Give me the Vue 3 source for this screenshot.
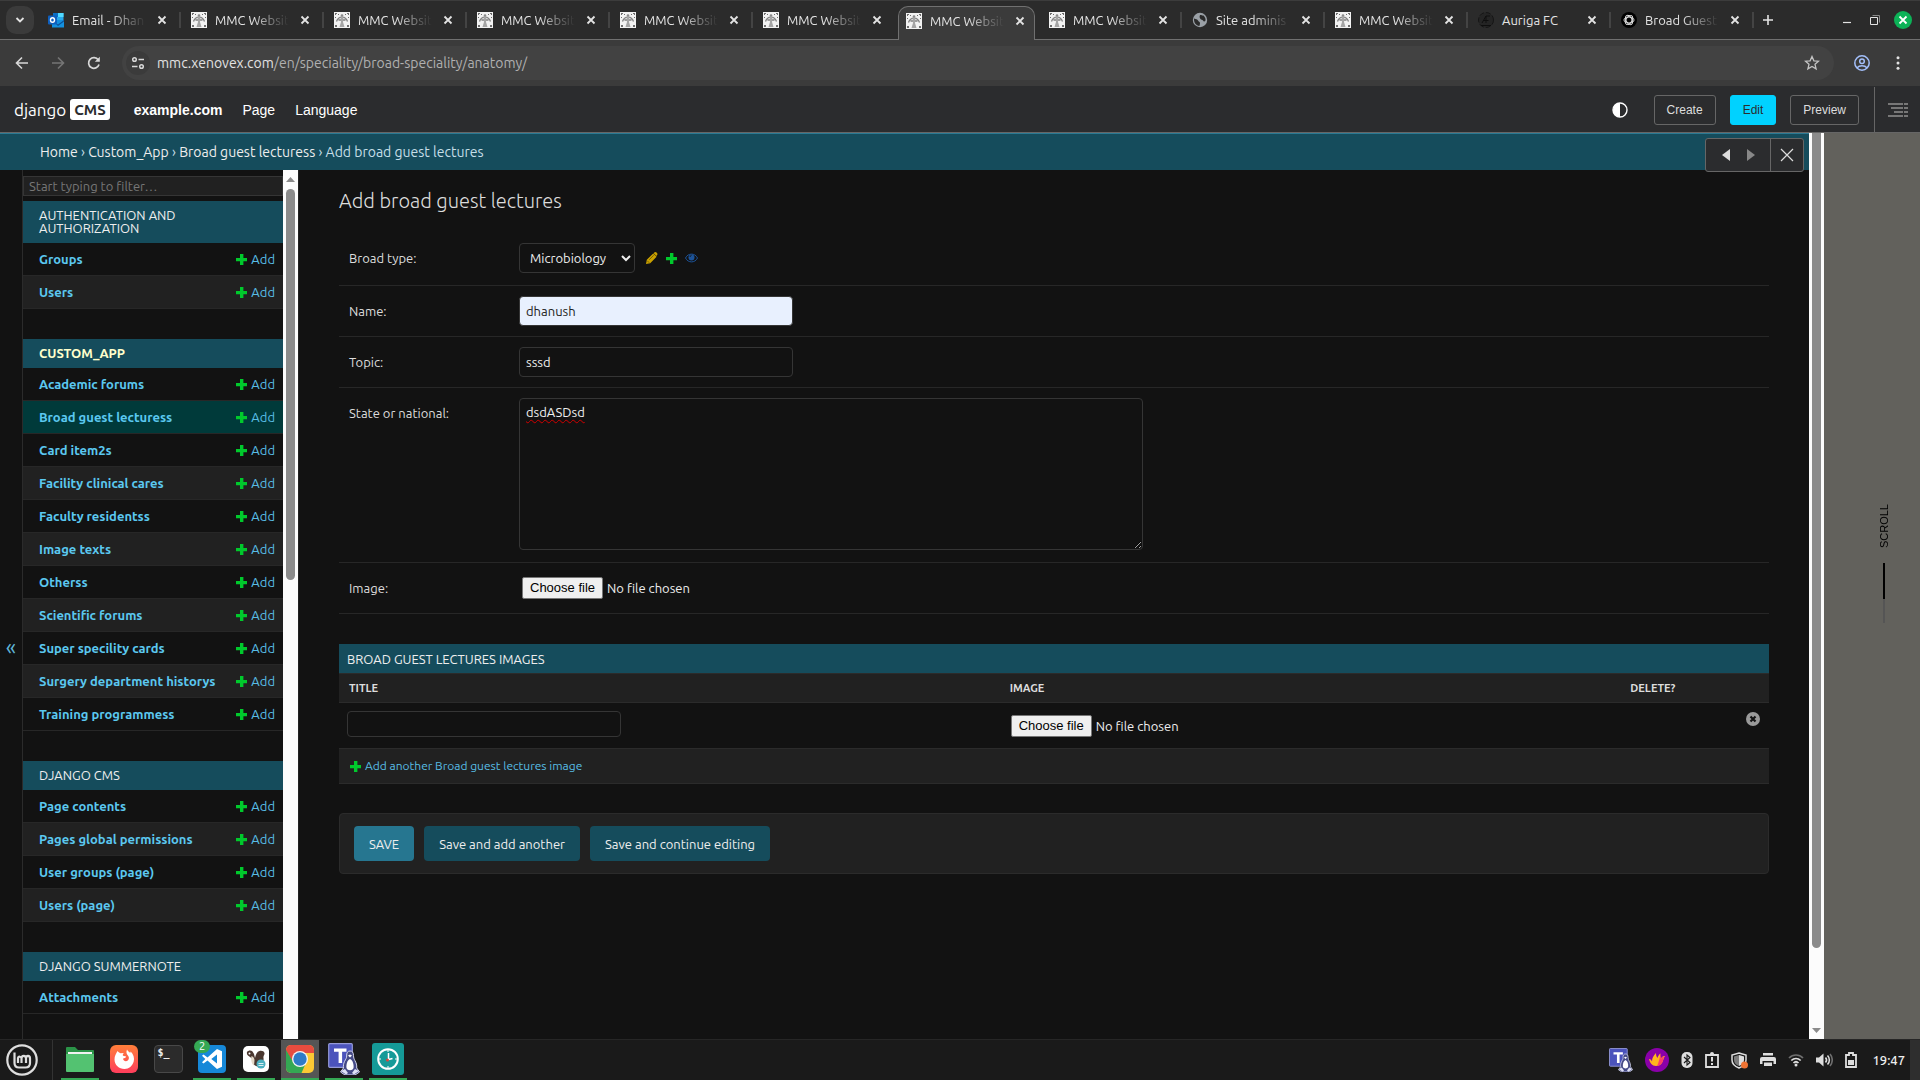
<script setup>
import { ref } from 'vue'

const tabs = [
  { title: 'Email - Dhan', icon: 'outlook' },
  { title: 'MMC Websit', icon: 'mmc' },
  { title: 'MMC Websit', icon: 'mmc' },
  { title: 'MMC Websit', icon: 'mmc' },
  { title: 'MMC Websit', icon: 'mmc' },
  { title: 'MMC Websit', icon: 'mmc' },
  { title: 'MMC Websit', icon: 'mmc', active: true },
  { title: 'MMC Websit', icon: 'mmc' },
  { title: 'Site adminis', icon: 'globe' },
  { title: 'MMC Websit', icon: 'mmc' },
  { title: 'Auriga FC', icon: 'auriga', short: true },
  { title: 'Broad Guest', icon: 'gpt' },
]

const apps = [
  { name: 'Authentication and Authorization', models: ['Groups', 'Users'] },
  {
    name: 'Custom_App',
    current: true,
    models: [
      'Academic forums',
      'Broad guest lecturess',
      'Card item2s',
      'Facility clinical cares',
      'Faculty residentss',
      'Image texts',
      'Otherss',
      'Scientific forums',
      'Super specility cards',
      'Surgery department historys',
      'Training programmess',
    ],
  },
  {
    name: 'django CMS',
    models: ['Page contents', 'Pages global permissions', 'User groups (page)', 'Users (page)'],
  },
  { name: 'Django Summernote', models: ['Attachments'] },
]

const currentModel = 'Broad guest lecturess'

const address = ref('/en/speciality/broad-speciality/anatomy/')
const broadType = ref('Microbiology')
const name = ref('dhanush')
const topic = ref('sssd')
const stateOrNational = ref('dsdASDsd')
</script>

<template>
  <div class="desktop">
    <!-- Shared symbols -->
    <svg class="defs" aria-hidden="true">
      <symbol id="i-close" viewBox="0 0 10 10">
        <path d="M1.5 1.5l7 7M8.5 1.5l-7 7" stroke="currentColor" stroke-width="1.8" fill="none" />
      </symbol>
      <symbol id="i-plus" viewBox="0 0 11 11">
        <path d="M4 0h3.4v4H11v3.2H7.4V11H4V7.2H0V4h4z" fill="currentColor" />
      </symbol>
      <symbol id="i-mmc" viewBox="0 0 16 16">
        <path d="M0 0h16v16H0z" fill="#f2f2f2" />
        <path d="M2.500 9.500C3.500 6.500 5.500 5.200 8 5.200s4.500 1.300 5.500 4.300M4.500 8h7" stroke="#808080" stroke-width="1.300" fill="none" />
        <path d="M6.500 5h3L9 10l1.500 5h-5L7 10z" fill="#a5a5a5" />
        <circle cx="8" cy="3.500" r="1.300" fill="#8a8a8a" />
        <path d="M1 1h2v1H2v1H1zM13 1h2v2h-1V2h-1zM1 13h2v2H1zM13 13h2v2h-2zM4 2h1v1H4zM11 2h1v1h-1zM1 5h1v1H1zM14 5h1v1h-1z" fill="#6d6d6d" />
      </symbol>
      <symbol id="i-outlook" viewBox="0 0 16 16">
        <path d="M5 1h10.500v9H5z" fill="#28a8ea" />
        <path d="M5 1h5v4H5z" fill="#0a6fc4" />
        <path d="M10 1h5.500v4H10z" fill="#50d9ff" />
        <path d="M4 8l12 0v7.500H4z" fill="#1490df" />
        <path d="M4 8l6 4.500L16 8v1.500l-6 4.500z" fill="#0a4f97" />
        <rect x="0" y="3.500" width="9" height="9" rx="1" fill="#0f5fbd" />
        <ellipse cx="4.500" cy="8" rx="2" ry="2.300" stroke="#fff" stroke-width="1.400" fill="none" />
      </symbol>
      <symbol id="i-globe" viewBox="0 0 16 16">
        <circle cx="8" cy="8" r="7.200" fill="#9aa0a6" />
        <path d="M2 6.500c2 1 3.500.500 4 2s2 1 2 2.500-.500 2-.500 3C4 13.500 1.800 11 2 6.500zM8 3c1.500-.500 2 1 3.500.500 1 1 2.500 3 2 5-1 1.500-2 1-2.500 0s-2-.500-2.500-1.500S7 5.500 8 3z" fill="#2b2b2b" />
      </symbol>
      <symbol id="i-auriga" viewBox="0 0 16 16">
        <circle cx="8" cy="8" r="7.500" fill="#242424" stroke="#161616" stroke-width="1" stroke-dasharray="5 2" />
        <path d="M4 11l4-7v7M5.500 8.500h5M8 4h4M3 13.500h10" stroke="#0e0e0e" stroke-width="1" fill="none" />
      </symbol>
      <symbol id="i-gpt" viewBox="0 0 16 16">
        <circle cx="8" cy="8" r="8" fill="#000" />
        <g stroke="#e8e8e8" stroke-width=".9" fill="none">
          <ellipse cx="8" cy="8" rx="5" ry="2.900" />
          <ellipse cx="8" cy="8" rx="5" ry="2.900" transform="rotate(60 8 8)" />
          <ellipse cx="8" cy="8" rx="5" ry="2.900" transform="rotate(120 8 8)" />
        </g>
      </symbol>
      <symbol id="i-teams" viewBox="0 0 32 32">
        <rect x=".7" y=".7" width="23.600" height="23.600" rx="1" fill="#4b53bc" stroke="#9499d8" stroke-width="1.200" />
        <path d="M6 5.500h12.500v3.300h-4.400V20h-3.500V8.800H6z" fill="#fff" />
        <path d="M22 8c-2.500 0-3.500 2-3.300 5 .1 2-1 3-2.200 5.500-1 2-1.300 4.500-1 6.500l-3 4 4.500 3h10l4.500-3-2.800-4c.3-3-.5-5-1.800-7.500-1-1.800-1.300-2.800-1.400-5C25.400 9.500 24.500 8 22 8z" fill="#454a86" stroke="#d6d8ee" stroke-width="1" />
        <path d="M22 16c-2.500 1-4 5-3.500 9 1 3 6 3 7 0 .5-4-1-8-3.500-9z" fill="#fff" />
        <path d="M20 12.500l2-1 2 1-2 2z" fill="#fff" />
        <path d="M13 28l4-2 3 4-2 1.500zM31 28l-4-2-3 4 2 1.500z" fill="#dfe1f5" />
      </symbol>
    </svg>

    <!-- Tab strip -->
    <header class="tabstrip">
      <button class="tab-search" type="button" aria-label="Search tabs">
        <svg width="10" height="8" viewBox="0 0 10 8"><path d="M1.500 2L5 5.500 8.500 2" stroke="#e3e3e3" stroke-width="1.800" fill="none" /></svg>
      </button>
      <nav class="tabs">
        <div v-for="(tab, i) in tabs" :key="i" class="tab" :class="{ active: tab.active, plain: tab.active || (tabs[i + 1] && tabs[i + 1].active) }">
          <svg width="16" height="16"><use :href="'#i-' + tab.icon" /></svg>
          <span class="tab-title" :class="{ faded: !tab.short }">{{ tab.title }}</span>
          <button class="tab-close" type="button" aria-label="Close tab">
            <svg width="10" height="10"><use href="#i-close" /></svg>
          </button>
        </div>
      </nav>
      <button class="icon-btn" type="button" aria-label="New tab">
        <svg width="12" height="12" viewBox="0 0 12 12"><path d="M6 1v10M1 6h10" stroke="#e3e3e3" stroke-width="1.600" /></svg>
      </button>
      <div class="window-controls">
        <button class="icon-btn" type="button" aria-label="Minimize">
          <svg width="10" height="10" viewBox="0 0 10 10"><path d="M1 7.500h8" stroke="#e3e3e3" stroke-width="1.200" /></svg>
        </button>
        <button class="icon-btn" type="button" aria-label="Restore">
          <svg width="12" height="12" viewBox="0 0 12 12"><path d="M1.500 3.500h7v7h-7z" stroke="#e3e3e3" fill="none" /><path d="M3.500 1.500h7v7" stroke="#8a8a8a" fill="none" /></svg>
        </button>
        <button class="icon-btn window-close" type="button" aria-label="Close">
          <svg width="10" height="10"><use href="#i-close" /></svg>
        </button>
      </div>
    </header>

    <!-- Address bar -->
    <div class="toolbar">
      <button class="icon-btn" type="button" aria-label="Back">
        <svg width="16" height="16" viewBox="0 0 16 16"><path d="M14 8H3M8 2.500L2.500 8 8 13.500" stroke="#d8d8d8" stroke-width="1.600" fill="none" /></svg>
      </button>
      <button class="icon-btn" type="button" aria-label="Forward">
        <svg width="16" height="16" viewBox="0 0 16 16"><path d="M2 8h11M8 2.500L13.500 8 8 13.500" stroke="#757575" stroke-width="1.600" fill="none" /></svg>
      </button>
      <button class="icon-btn" type="button" aria-label="Reload">
        <svg width="16" height="16" viewBox="0 0 16 16"><path d="M13 9.500A5.300 5.300 0 1 1 12.300 5" stroke="#d8d8d8" stroke-width="1.700" fill="none" /><path d="M13.800 1.800v5H8.800z" fill="#d8d8d8" /></svg>
      </button>
      <div class="omnibox">
        <span class="site-info">
          <svg width="14" height="14" viewBox="0 0 14 14"><g stroke="#d8d8d8" stroke-width="1.500" fill="none"><circle cx="3.500" cy="3.500" r="1.800" /><path d="M7.500 3.500H13M1 10.500h5.500" /><circle cx="10.500" cy="10.500" r="1.800" /></g></svg>
        </span>
        <span class="url"><b>mmc.xenovex.com</b>{{ address }}</span>
        <button class="icon-btn" type="button" aria-label="Bookmark">
          <svg width="16" height="16" viewBox="0 0 16 16"><path d="M8 1.500l1.900 4.300 4.600.400-3.500 3.100 1.100 4.600L8 11.400l-4.100 2.500L5 9.300 1.500 6.200l4.600-.400z" stroke="#c4c4c4" stroke-width="1.300" fill="none" /></svg>
        </button>
      </div>
      <button class="icon-btn" type="button" aria-label="Profile">
        <svg width="16" height="18" viewBox="1 0 16 18"><g stroke="#a3bffa" stroke-width="1.500" fill="none"><circle cx="9" cy="9" r="7.200" /><circle cx="9" cy="7.200" r="2.300" /><path d="M3.800 14c2.800-3 7.600-3 10.400 0" /></g></svg>
      </button>
      <button class="icon-btn" type="button" aria-label="Menu">
        <svg width="16" height="16" viewBox="0 0 16 16"><g fill="#e3e3e3"><circle cx="8" cy="2.800" r="1.500" /><circle cx="8" cy="8" r="1.500" /><circle cx="8" cy="13.200" r="1.500" /></g></svg>
      </button>
    </div>

    <!-- CMS toolbar -->
    <div class="cms-bar">
      <a class="cms-logo" href="#"><span>django</span><span class="cms-badge">CMS</span></a>
      <nav class="cms-menu">
        <a href="#"><strong>example.com</strong></a>
        <a href="#">Page</a>
        <a href="#">Language</a>
      </nav>
      <div class="cms-actions">
        <button class="icon-btn contrast" type="button" aria-label="Toggle theme">
          <svg width="16" height="16" viewBox="0 0 16 16"><circle cx="8" cy="8" r="7" stroke="#fff" stroke-width="1.400" fill="none" /><path d="M8 1a7 7 0 0 0 0 14z" fill="#fff" /></svg>
        </button>
        <button class="cms-btn" type="button">Create</button>
        <button class="cms-btn primary" type="button">Edit</button>
        <button class="cms-btn" type="button">Preview</button>
      </div>
      <button class="structure" type="button" aria-label="Structure">
        <svg width="20" height="16" viewBox="0 0 20 16"><g stroke="#777" stroke-width="2"><path d="M0 2h20M3 6h17M6 10h14M0 14h20" /></g><path d="M15.500 0v16" stroke="#2b2c2e" stroke-width="1" /></svg>
      </button>
    </div>

    <div class="viewport">
      <section class="modal">
        <nav class="breadcrumbs">
          <a href="#">Home</a> › <a href="#">Custom_App</a> › <a href="#">Broad guest lecturess</a> › Add broad guest lectures
        </nav>
        <div class="modal-controls">
          <button type="button" aria-label="Back"><svg width="8" height="12" viewBox="0 0 8 12"><path d="M8 0v12L0 6z" fill="#ddd" /></svg></button>
          <button type="button" aria-label="Forward"><svg width="8" height="12" viewBox="0 0 8 12"><path d="M0 0v12l8-6z" fill="#888" /></svg></button>
          <button class="modal-close" type="button" aria-label="Close"><svg width="14" height="14" viewBox="0 0 14 14"><path d="M1 1l12 12M13 1L1 13" stroke="#ddd" stroke-width="1.200" /></svg></button>
        </div>

        <div class="admin">
          <button class="nav-toggle" type="button" aria-label="Toggle navigation">«</button>
          <aside class="sidebar">
            <div class="sidebar-inner">
              <input class="filter" type="search" placeholder="Start typing to filter…" aria-label="Filter navigation items">
              <table v-for="app in apps" :key="app.name" class="module" :class="{ current: app.current }">
                <caption><a href="#">{{ app.name }}</a></caption>
                <tbody>
                  <tr v-for="model in app.models" :key="model" :class="{ selected: model === currentModel }">
                    <th scope="row"><a href="#">{{ model }}</a></th>
                    <td><a class="add" href="#"><svg width="11" height="11"><use href="#i-plus" /></svg>Add</a></td>
                  </tr>
                </tbody>
              </table>
            </div>
            <div class="scrollbar">
              <svg class="arrow" width="9" height="5" viewBox="0 0 9 5"><path d="M0 5h9L4.500 0z" fill="#8b8b8b" /></svg>
              <div class="thumb"></div>
            </div>
          </aside>

          <main class="content">
            <h1>Add broad guest lectures</h1>
            <form @submit.prevent>
              <div class="row">
                <label for="broad-type">Broad type:</label>
                <span class="related">
                  <select id="broad-type" v-model="broadType">
                    <option>Microbiology</option>
                  </select>
                  <a href="#" aria-label="Change"><svg width="12" height="12" viewBox="0 0 12 12"><path d="M0 12l.8-4.200L7.200 1.400l3.400 3.400L4.200 11.200zM8 .7c.9-.9 1.900-.9 2.800 0s.9 1.900 0 2.800l-.4.500L7.600 1.200z" fill="#c9a000" /><path d="M1.300 8.800l2 2M3.200 7.800l4.500-4.500" stroke="#6b5400" stroke-width=".8" /></svg></a>
                  <a href="#" class="green" aria-label="Add"><svg width="11" height="11"><use href="#i-plus" /></svg></a>
                  <a href="#" aria-label="View"><svg width="13" height="10" viewBox="0 0 13 10"><path d="M.5 5C3-.200 10-.200 12.500 5 10 10.200 3 10.200.5 5z" stroke="#1c5399" stroke-width="1" fill="none" /><circle cx="6.500" cy="4.600" r="3" fill="#1c5399" /><path d="M5 4a1.500 1.500 0 0 1 1.500-1.500" stroke="#121212" stroke-width=".8" fill="none" /></svg></a>
                </span>
              </div>
              <div class="row">
                <label for="name">Name:</label>
                <input id="name" v-model="name" class="text autofilled" type="text">
              </div>
              <div class="row">
                <label for="topic">Topic:</label>
                <input id="topic" v-model="topic" class="text" type="text">
              </div>
              <div class="row">
                <label for="state">State or national:</label>
                <textarea id="state" v-model="stateOrNational" spellcheck="false"></textarea>
              </div>
              <div class="row">
                <label for="image">Image:</label>
                <span class="file">
                  <input id="image" type="file">
                  <label class="file-btn" for="image">Choose file</label>
                  <span>No file chosen</span>
                </span>
              </div>

              <section class="inline-group">
                <h2>Broad guest lectures images</h2>
                <table>
                  <thead>
                    <tr><th class="c-title">Title</th><th class="c-image">Image</th><th>Delete?</th></tr>
                  </thead>
                  <tbody>
                    <tr>
                      <td><input class="text small" type="text" aria-label="Title"></td>
                      <td>
                        <span class="file">
                          <input id="inline-image" type="file">
                          <label class="file-btn" for="inline-image">Choose file</label>
                          <span>No file chosen</span>
                        </span>
                      </td>
                      <td class="delete">
                        <button class="icon-btn" type="button" aria-label="Remove">
                          <svg width="14" height="14" viewBox="0 0 14 14"><circle cx="7" cy="7" r="7" fill="#999" /><path d="M4.500 4.500l5 5M9.500 4.500l-5 5" stroke="#121212" stroke-width="2.200" /></svg>
                        </button>
                      </td>
                    </tr>
                    <tr class="add-row">
                      <td colspan="3"><a class="add" href="#"><svg width="11" height="11"><use href="#i-plus" /></svg>Add another Broad guest lectures image</a></td>
                    </tr>
                  </tbody>
                </table>
              </section>

              <div class="submit-row">
                <button class="default" type="submit">SAVE</button>
                <button type="submit">Save and add another</button>
                <button type="submit">Save and continue editing</button>
              </div>
            </form>
          </main>
        </div>
      </section>

      <div class="scrollbar outer">
        <div class="thumb"></div>
        <svg class="arrow" width="9" height="5" viewBox="0 0 9 5"><path d="M0 0h9L4.500 5z" fill="#8b8b8b" /></svg>
      </div>
      <div class="page-edge">
        <span class="scroll-text">SCROLL</span>
        <span class="scroll-line"></span>
      </div>
    </div>

    <!-- Desktop panel -->
    <footer class="panel">
      <button class="start" type="button" aria-label="Menu">
        <svg width="32" height="32" viewBox="0 0 32 32"><g stroke="#dedede" fill="none"><circle cx="16" cy="16" r="14.700" stroke-width="2.200" /><path d="M8.500 8.500v10.500c0 3 1.500 4.500 4.500 4.500h6.500c3 0 4.500-1.500 4.500-4.500v-4.500c0-3.500-4-3.500-4 0v4.500M20 14.500c0-3.500-4.500-3.500-4.500 0v4.500M15.500 14.500c0-2-3-2.500-3.500-.500v5" stroke-width="2.200" /></g></svg>
      </button>
      <div class="tasks">
        <button class="task open" type="button" aria-label="Files">
          <svg width="28" height="28" viewBox="0 0 28 28"><path d="M0 3a1 1 0 0 1 1-1h8l3 3h15a1 1 0 0 1 1 1v8H0z" fill="#2b9448" /><path d="M2 7h24v3H2z" fill="#f2f2f2" /><path d="M0 9h28v17a1 1 0 0 1-1 1H1a1 1 0 0 1-1-1z" fill="#53c271" /></svg>
        </button>
        <button class="task" type="button" aria-label="Firefox">
          <svg width="28" height="28" viewBox="0 0 28 28"><defs><linearGradient id="ff" x2="0" y2="1"><stop stop-color="#ff7f3a" /><stop offset="1" stop-color="#ff3d5c" /></linearGradient></defs><rect width="28" height="28" rx="6" fill="url(#ff)" /><path d="M7.500 6c1 1 1.500 1.800 3 2.200L14 8c-1 .8-1.500 1.700-1 2.800l3.200.8c-.5 1.500-2 1.500-3.200 2.200.5 2.700 3.500 3 5 1.500 1.500-1.600 1-4-.5-5.300-1-1-1.500-3-.5-5.500 1 1.800 2 2.500 3.300 3.300l.4-1.300c2.800 3 4 6.500 3 10C22.500 21 19 24 14.500 24 9 24 4.500 20 4.500 14.500 4.500 11 6 9 7.500 6z" fill="#fff" /></svg>
        </button>
        <button class="task" type="button" aria-label="Terminal">
          <span class="terminal">$_</span>
        </button>
        <button class="task open" type="button" aria-label="Visual Studio Code">
          <svg width="28" height="28" viewBox="0 0 28 28"><rect width="28" height="28" rx="4" fill="#1688d8" /><path d="M19 4l5 2.200v15.600L19 24 9.500 15.500l-4 3L4 17.300 7.300 14 4 10.700l1.500-1.200 4 3zM19 9.500L13.300 14l5.700 4.500z" fill="#fff" fill-rule="evenodd" /></svg>
          <span class="badge">2</span>
        </button>
        <button class="task open" type="button" aria-label="DBeaver">
          <svg width="26" height="26" viewBox="0 0 26 26"><rect width="26" height="26" rx="5" fill="#fff" /><path d="M4 6c1.500-2 4-2 5.500-.5L11 8l1 4c1-4 2-6.500 4.500-7 2-.5 4.500 0 5 2 .3 2-1.500 2.500-1 5 .5 4-1.500 8.500-5.500 8.500C10.500 20 10 17 9 13 8 10.500 3 10.500 4 6z" fill="#4a372f" /><path d="M8.500 10c2 1 3 2 3 4.500l-.5 5c-3-2-3-6-2.500-9.500z" fill="#e4d9c8" /><circle cx="6.500" cy="7.500" r="1" fill="#fff" /><circle cx="18" cy="18" r="4.500" fill="#4cb0c0" /><path d="M15.500 17.500h5M15.500 19.500h5" stroke="#fff" stroke-width=".8" /></svg>
        </button>
        <button class="task open focused" type="button" aria-label="Chrome">
          <svg width="28" height="28" viewBox="0 0 28 28"><defs><clipPath id="cr"><rect width="28" height="28" rx="5" /></clipPath></defs><g clip-path="url(#cr)"><path d="M0 0h28v28H0z" fill="#fcc934" /><path d="M0 0h28v8H14L7 17 0 6z" fill="#e74c3f" /><path d="M0 5l7.500 12.500L19 20l-3.500 8H0z" fill="#34a853" /></g><circle cx="14" cy="14" r="8" fill="#f4f4f4" /><circle cx="14" cy="14" r="6.700" fill="#2f7bc8" /></svg>
        </button>
        <button class="task open" type="button" aria-label="Teams">
          <svg width="32" height="32"><use href="#i-teams" /></svg>
        </button>
        <button class="task open" type="button" aria-label="Timer">
          <svg width="32" height="32" viewBox="0 0 32 32"><rect width="32" height="32" rx="3" fill="#159a98" /><circle cx="16" cy="16" r="9.800" stroke="#fff" stroke-width="2" fill="none" /><path d="M16 6v3M16 23v3M6 16h3M23 16h3" stroke="#fff" /><path d="M16.500 10v6.500l4-1" stroke="#fff" stroke-width="1.500" fill="none" /><circle cx="15.500" cy="17" r="1.500" fill="#d9443c" /></svg>
        </button>
      </div>
      <div class="tray">
        <svg width="24" height="24"><use href="#i-teams" /></svg>
        <svg width="24" height="24" viewBox="0 0 24 24"><circle cx="12" cy="12" r="12" fill="#8a00a8" /><path d="M4 11c2 0 2.500 1.500 3 2.500C7 10 8.500 8 11 5c0 2.500.5 3.500 1.500 5 .5-2 1.500-3.500 3-4.500-.5 2.500 0 4 .5 5 1-2 2.500-2.500 4-2.500-1.500 2-1.500 4-2.500 6-1.500 3-4 4-6.500 4-4 0-6-3-7-7z" fill="#ffb61e" /><path d="M16 5c-1 3 0 4 0 6 1-2 2-2.500 3.500-3-1.500 2-1 4-2 6-1.300 2.500-3 3.500-5.500 4 2-3 2.500-9 4-13z" fill="#ff3d68" /></svg>
        <svg width="12" height="16" viewBox="0 0 12 16"><rect x=".5" width="11" height="16" rx="5" fill="#dedede" /><path d="M3 5l6 5.500L6 13V3l3 2.500L3 11" stroke="#1a1a1a" stroke-width="1.100" fill="none" /></svg>
        <svg width="14" height="16" viewBox="0 0 14 16"><path d="M1 3h12v12H1z" stroke="#dedede" stroke-width="1.800" fill="none" /><circle cx="7" cy="2" r="2" fill="#dedede" /><path d="M7 5v4.500M7 11v2" stroke="#dedede" stroke-width="2" /></svg>
        <svg width="17" height="17" viewBox="0 0 17 17"><path d="M8 1l7 2v5c0 4-3 6.500-7 8-4-1.500-7-4-7-8V3z" stroke="#dedede" stroke-width="1.500" fill="none" /><path d="M8 3v11c-3-1.300-5-3-5-6V4.500z" fill="#dedede" opacity=".5" /><path d="M8 3l5 1.500V8c0 3-2 4.700-5 6z" fill="#dedede" /><circle cx="13.500" cy="13" r="3.500" fill="#ef7434" /></svg>
        <svg width="16" height="14" viewBox="0 0 16 14"><path d="M3 0h10v2.500H3zM0 6a2 2 0 0 1 2-2h12a2 2 0 0 1 2 2v5h-2.500V8h-11v3H0zM4 9.500h8V13H4z" fill="#dedede" /></svg>
        <svg width="16" height="14" viewBox="0 0 16 14"><g fill="none" stroke-width="1.700"><path d="M1 5c4-4 10-4 14 0" stroke="#6e6e6e" /><path d="M3.300 7.500c2.700-2.700 6.700-2.700 9.400 0M5.500 10c1.500-1.500 3.500-1.500 5 0" stroke="#dedede" /></g><circle cx="8" cy="12" r="1.500" fill="#dedede" /></svg>
        <svg width="17" height="14" viewBox="0 0 17 14"><path d="M0 4.500h3L7.500.5v13L3 9.500H0z" fill="#dedede" /><g fill="none" stroke-width="1.600"><path d="M9.500 4.500c1.300 1.500 1.300 3.500 0 5M11.500 2.500c2.500 2.500 2.500 6.500 0 9" stroke="#dedede" /><path d="M14 1c3 3.500 3 8.500 0 12" stroke="#6e6e6e" /></g></svg>
        <svg width="12" height="16" viewBox="0 0 12 16"><path d="M1 3h3V1h4v2h3v12H1z" stroke="#dedede" stroke-width="1.800" fill="none" /><path d="M3 8h6v5H3z" fill="#dedede" /></svg>
        <time>19:47</time>
      </div>
      <span class="show-desktop"></span>
    </footer>
  </div>
</template>

<style>
body {
  margin: 0;
  background: #121212;
}
</style>

<style scoped>
* {
  box-sizing: border-box;
}
.desktop {
  display: flex;
  flex-direction: column;
  height: 100vh;
  overflow: hidden;
  font: 13px/16px Ubuntu, "Noto Sans", sans-serif;
  color: #eee;
  background: #121212;
}
.defs {
  position: absolute;
  width: 0;
  height: 0;
}
svg {
  display: block;
  flex: none;
}
a {
  color: inherit;
  text-decoration: none;
}
button {
  padding: 0;
  border: 0;
  background: none;
  color: inherit;
  font: inherit;
  cursor: pointer;
}
.icon-btn {
  display: flex;
  align-items: center;
  justify-content: center;
}

/* Tab strip */
.tabstrip {
  display: flex;
  align-items: center;
  flex: none;
  height: 40px;
  padding: 0 8px 0 6px;
  background: #2b2b2b;
  border-top: 1px solid #3c3c3c;
  border-bottom: 1px solid #707070;
}
.tab-search {
  display: flex;
  align-items: center;
  justify-content: center;
  width: 28px;
  height: 28px;
  margin-right: 6px;
  border-radius: 10px;
  background: #3b3b3b;
}
.tabs {
  display: flex;
  align-self: stretch;
  flex: 0 1 1716px;
  min-width: 0;
}
.tab {
  position: relative;
  display: flex;
  align-items: center;
  flex: 1 1 0;
  min-width: 0;
  margin: 5px 6px 0 0;
  padding: 0 5px 5px 8px;
  color: #e3e3e3;
}
.tab::after {
  content: "";
  position: absolute;
  top: 6px;
  right: -4px;
  width: 2px;
  height: 16px;
  background: #444;
}
.tab.plain::after {
  display: none;
}
.tab.active {
  margin-bottom: -1px;
  padding: 0 4px 6px 7px;
  border: 1px solid #707070;
  border-bottom: 0;
  border-radius: 10px 10px 0 0;
  background: #3b3b3b;
}
.tab-title {
  flex: 1;
  min-width: 0;
  margin: 0 6px 0 8px;
  white-space: nowrap;
}
.tab-title.faded {
  mask-image: linear-gradient(90deg, #000 50%, transparent);
}
.tab-close {
  display: flex;
  align-items: center;
  justify-content: center;
  width: 20px;
  height: 20px;
}
.tabstrip > .icon-btn {
  width: 24px;
  height: 28px;
}
.window-controls {
  display: flex;
  align-items: center;
  gap: 10px;
  margin-left: auto;
}
.window-controls .icon-btn {
  width: 18px;
  height: 18px;
}
.window-close {
  border-radius: 50%;
  background: #0cb257;
  color: #fff;
}

/* Address bar */
.toolbar {
  display: flex;
  align-items: center;
  flex: none;
  gap: 20px;
  height: 46px;
  padding: 0 14px;
  background: #3b3b3b;
}
.omnibox {
  display: flex;
  align-items: center;
  flex: 1;
  height: 34px;
  padding: 0 14px 0 4px;
  border-radius: 17px;
  background: #424242;
}
.site-info {
  display: flex;
  align-items: center;
  justify-content: center;
  width: 24px;
  height: 24px;
  border-radius: 50%;
  background: #3b3b3b;
}
.url {
  flex: 1;
  margin-left: 7px;
  font-size: 14px;
  color: #b0b0b0;
}
.url b {
  font-weight: 400;
  color: #e3e3e3;
}

/* CMS toolbar */
.cms-bar {
  display: flex;
  align-items: center;
  flex: none;
  height: 47px;
  padding: 1px 0 0 14px;
  border-bottom: 1px solid #666;
  background: #2b2c2e;
  font-family: "Liberation Sans", Arial, sans-serif;
  color: #fff;
}
.cms-logo {
  display: flex;
  align-items: center;
  gap: 4px;
  font: 17px/22px Ubuntu, "Noto Sans", sans-serif;
}
.cms-badge {
  height: 21px;
  padding: 0 4px;
  border-radius: 3px;
  background: #fff;
  font-size: 15px;
  font-weight: 600;
  line-height: 21px;
  color: #2b2c2e;
}
.cms-menu {
  display: flex;
  gap: 20px;
  margin-left: 24px;
  font-size: 14px;
}
.cms-actions {
  display: flex;
  align-items: center;
  gap: 14px;
  margin: 0 15px 0 auto;
}
.contrast {
  margin-right: 12px;
}
.cms-btn {
  height: 30px;
  padding: 0 12px;
  border: 1px solid #666;
  border-radius: 3px;
  font-size: 12px;
  color: #ddd;
}
.cms-btn.primary {
  border-color: #00d2ff;
  background: #00d2ff;
  color: #2b2c2e;
}
.structure {
  align-self: stretch;
  width: 46px;
  padding-left: 13px;
  border-left: 1px solid #666;
}

/* Page area */
.viewport {
  display: flex;
  flex: 1;
  min-height: 0;
}
.modal {
  position: relative;
  display: flex;
  flex-direction: column;
  flex: 1;
  min-width: 0;
  background: #121212;
}
.breadcrumbs {
  flex: none;
  padding: 10px 40px;
  border-top: 1px solid #2b7a94;
  background: #154c5c;
  font-size: 14px;
  color: #c5dfe8;
}
.breadcrumbs a {
  color: #eee;
}
.modal-controls {
  position: absolute;
  top: 5px;
  right: 5px;
  display: flex;
  height: 34px;
  border: 1px solid #666;
  border-radius: 3px;
  background: #2b2c2e;
}
.modal-controls button {
  display: flex;
  align-items: center;
  justify-content: center;
  width: 25px;
}
.modal-controls button:first-child {
  margin-left: 7px;
}
.modal-controls .modal-close {
  width: 33px;
  margin-left: 7px;
  border-left: 1px solid #666;
}
.admin {
  display: flex;
  flex: 1;
  min-height: 0;
}
.nav-toggle {
  width: 23px;
  padding: 84px 0 0;
  border-right: 1px solid #2b2b2b;
  font-size: 22px;
  text-align: center;
  color: #5fb4d8;
}
.sidebar {
  display: flex;
  width: 276px;
  border-right: 1px solid #222;
}
.sidebar-inner {
  flex: 1;
  min-width: 0;
  padding-top: 6px;
  overflow: hidden;
}
.filter {
  display: block;
  width: 100%;
  height: 20px;
  margin-bottom: 5px;
  padding: 0 5px;
  border: 1px solid #353535;
  outline: 0;
  background: #212121;
  font: inherit;
  color: #eee;
}
.filter::placeholder {
  color: #777;
}
.module {
  width: 100%;
  margin-bottom: 30px;
  border-spacing: 0;
}
.module caption {
  padding: 8px 60px 8px 16px;
  background: #154c5c;
  font-size: 13px;
  line-height: 13px;
  text-align: left;
  text-transform: uppercase;
  color: #eee;
}
.module.current caption {
  font-weight: 700;
  color: #ffffcc;
}
.module th,
.module td {
  height: 33px;
  padding: 0 8px 0 16px;
  border-bottom: 1px solid #272727;
  font-weight: 600;
  text-align: left;
  white-space: nowrap;
  color: #5bc8f0;
}
.module td {
  width: 64px;
  padding-left: 0;
  font-weight: 400;
}
.module tr:nth-child(even) {
  background: #212121;
}
.module tr.selected {
  background: #003a3a;
}
.add {
  display: flex;
  align-items: center;
  justify-content: flex-end;
  gap: 4px;
  color: #58bde4;
}
.add svg,
.green {
  color: #00c92c;
}
.scrollbar {
  display: flex;
  flex-direction: column;
  align-items: center;
  flex: none;
  width: 15px;
  background: #fcfcfc;
}
.scrollbar .arrow {
  margin: 7px 0;
}
.scrollbar .thumb {
  width: 9px;
  height: 45%;
  border-radius: 5px;
  background: #8b8b8b;
}
.scrollbar.outer .thumb {
  flex: 0 0 90%;
  border-radius: 0 0 5px 5px;
}
.scrollbar.outer .arrow {
  margin: auto 0 6px;
}

/* Form */
.content {
  flex: 1;
  min-width: 0;
  padding: 19px 40px 30px;
}
h1 {
  margin: 0 0 30px;
  font-size: 20px;
  font-weight: 300;
  line-height: 24px;
  color: #ddd;
}
.row {
  display: flex;
  align-items: flex-start;
  padding: 10px;
  border-bottom: 1px solid #272727;
}
.row:first-child {
  padding: 0 10px 12px;
}
.row > label {
  width: 170px;
  padding-top: 7px;
  color: #ddd;
}
.related {
  display: flex;
  align-items: center;
  gap: 8px;
}
select,
.text,
textarea {
  height: 30px;
  border: 1px solid #353535;
  border-radius: 4px;
  outline: 0;
  background: #121212;
  font: inherit;
  color: #eee;
}
select {
  width: 116px;
  margin-right: 3px;
  padding: 0 0 0 6px;
}
.text {
  width: 274px;
  padding: 0 6px;
}
.autofilled {
  background: #e8f0fe;
  color: #222;
}
.text.small {
  display: block;
  height: 26px;
}
textarea {
  display: block;
  width: 624px;
  height: 152px;
  margin-bottom: 2px;
  padding: 5px 6px;
  text-decoration: underline wavy #d00000 1px;
  text-underline-offset: 2px;
}
.file {
  position: relative;
  display: flex;
  align-items: center;
  gap: 4px;
  height: 30px;
  margin-left: 3px;
}
.file input {
  position: absolute;
  width: 1px;
  height: 1px;
  opacity: 0;
}
.file-btn {
  padding: 2px 7px;
  border: 1px solid #767676;
  border-radius: 2px;
  background: #efefef;
  font-family: "Liberation Sans", Arial, sans-serif;
  color: #000;
}
.inline-group {
  margin-top: 30px;
}
h2 {
  margin: 0;
  padding: 7px 8px 6px;
  background: #154c5c;
  font-size: 13px;
  font-weight: 400;
  text-transform: uppercase;
}
.inline-group table {
  width: 100%;
  border-spacing: 0;
  border-top: 1px solid #2b2b2b;
}
.inline-group th {
  height: 29px;
  padding: 0 10px;
  border-bottom: 1px solid #2b2b2b;
  background: #212121;
  font-size: 11px;
  font-weight: 600;
  text-align: left;
  text-transform: uppercase;
  color: #ddd;
}
.c-title {
  width: 46.2%;
}
.c-image {
  width: 43.4%;
}
.inline-group td {
  height: 46px;
  padding: 8px 8px 7px;
  border-bottom: 1px solid #2b2b2b;
  vertical-align: top;
}
.inline-group .delete {
  padding: 9px;
}
.delete .icon-btn {
  margin-left: auto;
}
.inline-group .add-row td {
  height: 35px;
  padding: 9px 11px;
  background: #212121;
  font-size: 12px;
}
.add-row .add {
  justify-content: flex-start;
}
.submit-row {
  display: flex;
  gap: 10px;
  margin-top: 29px;
  padding: 12px 14px;
  border: 1px solid #2b2b2b;
  border-radius: 4px;
  background: #212121;
}
.submit-row button {
  height: 35px;
  padding: 0 15px;
  border-radius: 4px;
  background: #154c5c;
}
.submit-row .default {
  background: #267690;
}

/* Visible edge of the page behind the modal */
.page-edge {
  display: flex;
  flex-direction: column;
  align-items: center;
  width: 96px;
  padding: 371px 0 0 24px;
  background: #62615c;
}
.scroll-text {
  writing-mode: vertical-rl;
  transform: rotate(180deg);
  font: 11px/16px "Liberation Sans", Arial, sans-serif;
  color: #000;
}
.scroll-line {
  width: 2px;
  height: 60px;
  margin-top: 15px;
  background: linear-gradient(#000 60%, #555 60%);
}

/* Desktop panel */
.panel {
  display: flex;
  align-items: center;
  flex: none;
  height: 41px;
  border-top: 1px solid #262626;
  background: #1a1a1a;
}
.start {
  align-self: stretch;
  width: 53px;
  margin-right: 8px;
  padding-left: 6px;
  border-right: 1px solid #333;
}
.tasks {
  display: flex;
  align-self: stretch;
  gap: 6px;
}
.task {
  position: relative;
  display: flex;
  align-items: center;
  justify-content: center;
  width: 38px;
  border-bottom: 2px solid transparent;
}
.task.open {
  border-bottom-color: #35a854;
}
.task.focused {
  background: #555;
}
.terminal {
  width: 29px;
  height: 28px;
  padding-left: 3px;
  border: 1px solid #484848;
  border-radius: 4px;
  background: #2b2b2b;
  font: 700 10px/14px "DejaVu Sans Mono", monospace;
  text-align: left;
  color: #eee;
}
.badge {
  position: absolute;
  top: 0;
  left: 1px;
  width: 16px;
  height: 13px;
  border-radius: 7px;
  background: #35a854;
  font-size: 11px;
  line-height: 13px;
  color: #fff;
}
.tray {
  display: flex;
  align-items: center;
  gap: 12px;
  margin: 0 5px 0 auto;
}
.tray time {
  margin-left: 3px;
  font-weight: 500;
}
.show-desktop {
  align-self: stretch;
  width: 10px;
  background: #2e2e2e;
}
</style>
